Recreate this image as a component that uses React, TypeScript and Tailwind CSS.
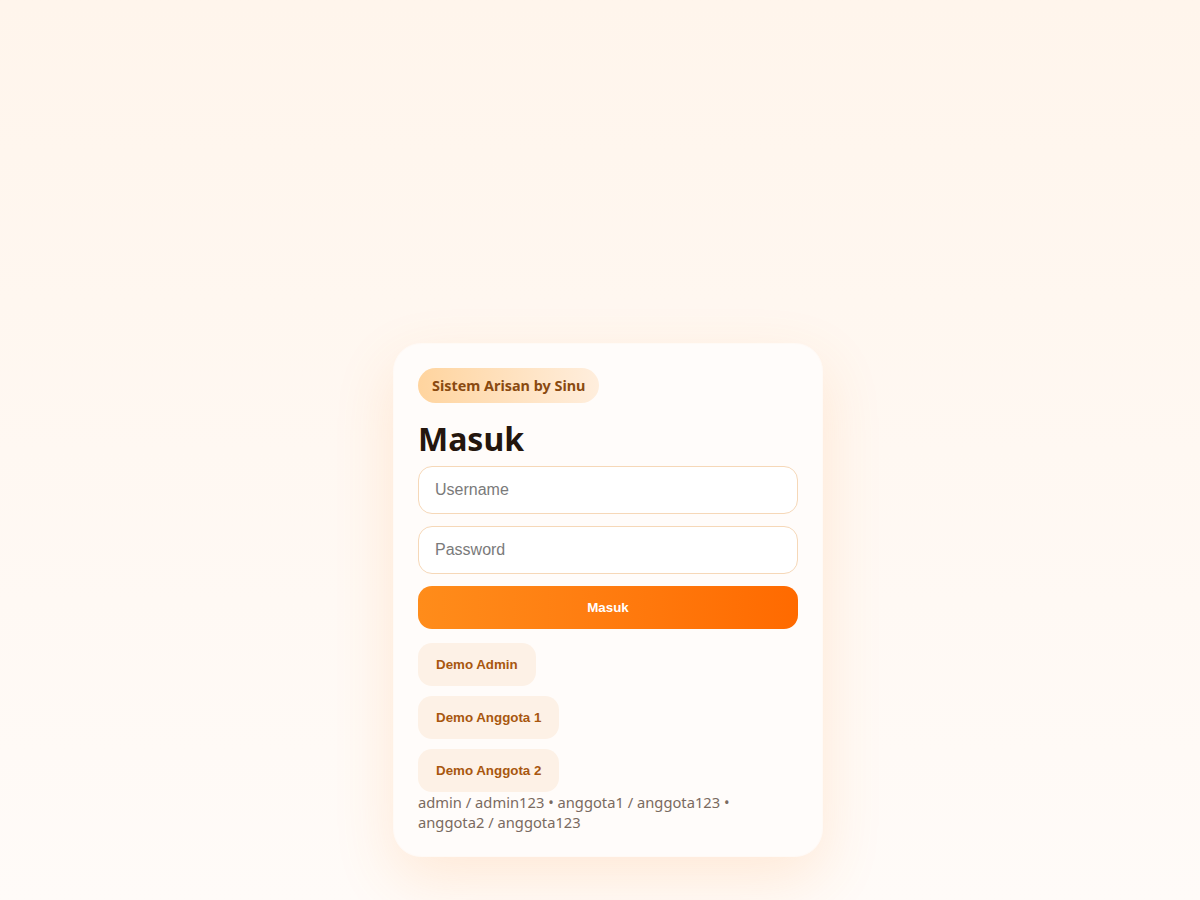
import React from "react";

export default function App() {
  const noto = { fontFamily: '"Noto Sans", "Open Sans", sans-serif' };
  const arial = { fontFamily: '"Liberation Sans", Arial, sans-serif' };
  return (
    <div className="min-h-[900px] w-full bg-gradient-to-b from-[#fff5ec] to-[#fffbf8] flex justify-center pt-[343px] pl-[16px]" style={noto}>
      <div className="w-[430px] h-[514px] rounded-[28px] bg-[#fffcfa] border border-[#fffaf6] shadow-[0_22px_60px_rgba(255,140,50,0.16)] p-6 flex flex-col">
        <div className="self-start h-[35px] px-[14px] rounded-full bg-gradient-to-r from-[#ffd49e] to-[#ffeedd] flex items-center text-[14.4px] font-bold text-[#8a4a10]">
          Sistem Arisan by Sinu
        </div>
        <h1 className="mt-4 mb-2 text-[32px] leading-[39px] font-bold text-[#24160e]">Masuk</h1>
        <input
          placeholder="Username"
          className="h-[48px] w-full rounded-[14px] border border-[#f6d8b8] bg-white px-4 text-[16px] text-[#333] placeholder:text-[#7a7a7a] outline-none"
          style={arial}
        />
        <input
          placeholder="Password"
          type="password"
          className="mt-3 h-[48px] w-full rounded-[14px] border border-[#f6d8b8] bg-white px-4 text-[16px] text-[#333] placeholder:text-[#7a7a7a] outline-none"
          style={arial}
        />
        <button
          className="mt-3 h-[43px] w-full rounded-[14px] bg-gradient-to-r from-[#ff8c1a] to-[#ff6a00] text-white text-[13.333px] font-bold"
          style={arial}
        >
          Masuk
        </button>
        <div className="mt-[14px] flex flex-col items-start gap-[10px]">
          {["Demo Admin", "Demo Anggota 1", "Demo Anggota 2"].map((t) => (
            <button
              key={t}
              className="h-[43px] px-[18px] rounded-[14px] bg-[#fdf1e6] text-[#a8570f] text-[13.333px] font-bold"
              style={arial}
            >
              {t}
            </button>
          ))}
        </div>
        <p className="text-[14.72px] leading-[20px] text-[#7a6a60] pr-[40px]">
          admin / admin123 • anggota1 / anggota123 • anggota2 / anggota123
        </p>
      </div>
    </div>
  );
}
